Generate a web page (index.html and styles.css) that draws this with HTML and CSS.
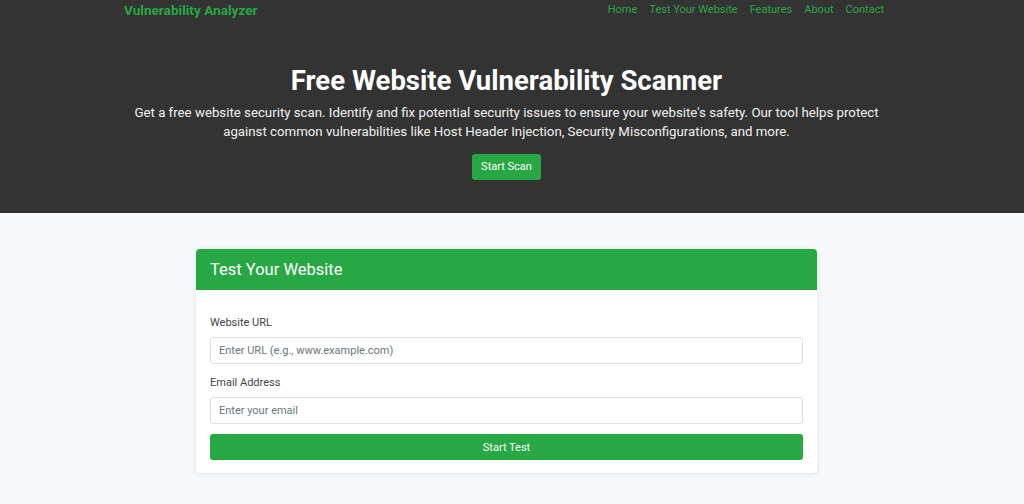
FILE: index.html
```html
<!DOCTYPE html>
<html lang="en">
<head>
<meta charset="utf-8">
<title>Vulnerability Analyzer</title>
<link rel="stylesheet" href="styles.css">
</head>
<body>
<header class="hero-wrap">
  <div class="nav-wrap">
    <nav class="navbar">
      <a class="brand" href="#">Vulnerability Analyzer</a>
      <ul class="nav-links">
        <li><a href="#">Home</a></li>
        <li><a href="#">Test Your Website</a></li>
        <li><a href="#">Features</a></li>
        <li><a href="#">About</a></li>
        <li><a href="#">Contact</a></li>
      </ul>
    </nav>
  </div>
  <section class="hero">
    <h1>Free Website Vulnerability Scanner</h1>
    <p>Get a free website security scan. Identify and fix potential security issues to ensure your website's safety. Our tool helps protect against common vulnerabilities like Host Header Injection, Security Misconfigurations, and more.</p>
    <a class="btn-scan" href="#">Start Scan</a>
  </section>
</header>
<main class="main">
  <div class="card">
    <div class="card-header">Test Your Website</div>
    <form class="card-body">
      <label class="label" for="url">Website URL</label>
      <input class="input" id="url" type="text" placeholder="Enter URL (e.g., www.example.com)">
      <label class="label label-2" for="email">Email Address</label>
      <input class="input" id="email" type="email" placeholder="Enter your email">
      <button class="btn-test" type="button">Start Test</button>
    </form>
  </div>
</main>
</body>
</html>
```

FILE: styles.css
```css
* { box-sizing: border-box; }
html, body { margin: 0; padding: 0; }
body {
  font-family: Roboto, "Liberation Sans", Arial, sans-serif;
  background: #f8f9fa;
  color: #212529;
  height: 504px;
  overflow: hidden;
}
.hero-wrap {
  background: #333333;
  height: 213px;
}
.nav-wrap {
  padding-right: 16px;
}
.navbar {
  width: 760px;
  margin: 0 auto;
  height: 22px;
  display: flex;
  align-items: flex-start;
  justify-content: space-between;
  padding-top: 2px;
}
.brand {
  color: #28a745;
  font-weight: 700;
  font-size: 13.6px;
  line-height: 16px;
  text-decoration: none;
}
.nav-links {
  list-style: none;
  display: flex;
  gap: 12px;
  margin: 0;
  padding: 0;
}
.nav-links a {
  display: block;
  color: #2ba648;
  font-size: 11px;
  line-height: 16px;
  text-decoration: none;
}
.hero {
  text-align: center;
  padding-top: 42px;
  padding-right: 11px;
}
.hero h1 {
  margin: 0;
  color: #ffffff;
  font-size: 27.5px;
  font-weight: 700;
  line-height: 34px;
}
.hero p {
  margin: 5px auto 0;
  width: 760px;
  color: #f1f1f1;
  font-size: 13.25px;
  line-height: 19px;
}
.btn-scan {
  display: inline-block;
  margin-top: 13px;
  background: #28a745;
  color: #ffffff;
  font-size: 11px;
  line-height: 26px;
  height: 26px;
  padding: 0 9px;
  border-radius: 3px;
  text-decoration: none;
}
.main {
  padding-top: 36px;
  padding-right: 11px;
}
.card {
  width: 621px;
  margin: 0 auto;
  background: #ffffff;
  border-radius: 4px;
  box-shadow: 0 1px 6px rgba(0, 0, 0, 0.09);
  overflow: hidden;
}
.card-header {
  background: #28a745;
  color: #ffffff;
  font-size: 16.5px;
  line-height: 21px;
  padding: 10px 14px;
}
.card-body {
  display: flex;
  flex-direction: column;
  padding: 24px 14px 13px;
}
.label {
  font-size: 11px;
  line-height: 17px;
  color: #444444;
  margin-bottom: 6px;
}
.label-2 { margin-top: 10px; }
.input {
  height: 27px;
  border: 1px solid #dcdfe3;
  border-radius: 3px;
  padding: 0 8px;
  font-family: inherit;
  font-size: 11px;
  color: #495057;
  background: #ffffff;
}
.input::placeholder { color: #6c757d; }
.btn-test {
  margin-top: 10px;
  height: 26px;
  border: none;
  border-radius: 3px;
  background: #28a745;
  color: #ffffff;
  font-family: inherit;
  font-size: 11px;
}
```
